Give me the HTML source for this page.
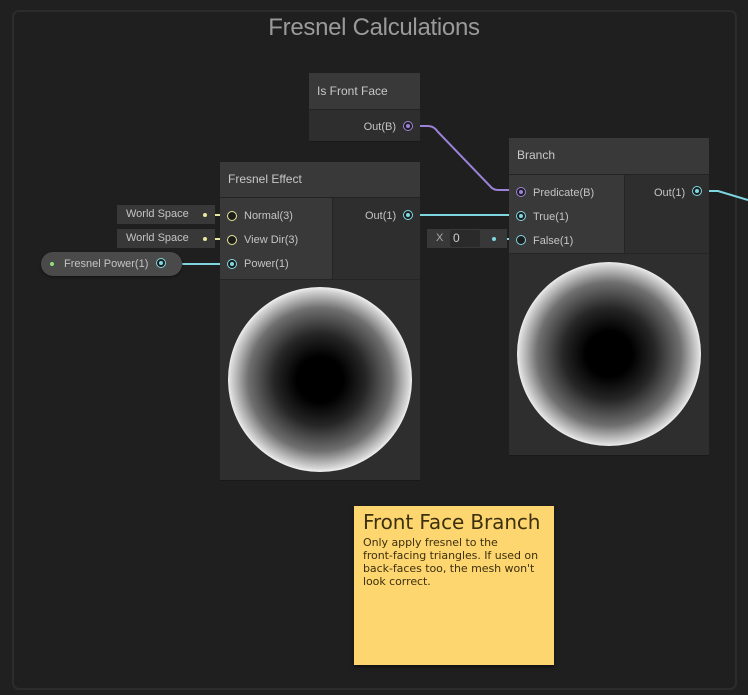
<!DOCTYPE html>
<html><head><style>
*{margin:0;padding:0;box-sizing:border-box}
body{width:748px;height:695px;background:#202020;position:relative;overflow:hidden;font-family:"Liberation Sans",sans-serif;color:#c4c4c4;font-size:11px}
.a{position:absolute}
.group{left:12px;top:10px;width:725px;height:680px;border:2px solid #2c2c2c;border-radius:7px;background:#1f1f1f}
.title{left:0;width:748px;top:14px;text-align:center;font-size:24px;color:#9a9a9a;letter-spacing:-0.3px}
.node{background:#2e2e2e;box-shadow:0 1px 0 #191919}
.hdr{background:#393939;border-bottom:1px solid #232323;font-size:12px;color:#c8c8c8;padding-left:8px}
.inp{background:#393939}
.sphere{border-radius:50%;background:radial-gradient(circle closest-side,#000 0%,#000 25%,#262626 50%,#707070 78%,#d8d8d8 97%,#eee 100%)}
.port{width:10px;height:10px;border-radius:50%;border:1.5px solid #7fd6e0;background:#1d1d1d}
.port.f:after{content:"";position:absolute;left:1.5px;top:1.5px;width:4px;height:4px;border-radius:50%;background:#7fd6e0}
.port.p{border-color:#9b82d8}.port.p:after{background:#9b82d8}
.port.y{border-color:#e8e89a}
.lbl{font-size:11px;color:#c4c4c4}
.ws{background:#383838;font-size:11px;color:#c4c4c4;padding-left:9px;line-height:18px}
</style></head><body>
<div class="a group"></div>
<div class="a title">Fresnel Calculations</div>

<svg class="a" style="left:0;top:0" width="748" height="695">
<path d="M410 126 H428 Q434 126 438 132 L490 186 Q493 190 498 190 H518" stroke="#9b82d8" stroke-width="2" fill="none"/>
<path d="M410 215 H518" stroke="#7fd6e0" stroke-width="2" fill="none"/>
<path d="M182 264 H230" stroke="#7fd6e0" stroke-width="2" fill="none"/>
<path d="M496 239 H518" stroke="#7fd6e0" stroke-width="2" fill="none"/>
<path d="M699 191 H718 L748 200" stroke="#7fd6e0" stroke-width="2" fill="none"/>
<path d="M205 215 H230 M205 239 H230" stroke="#e8e89a" stroke-width="2" fill="none"/>
</svg>

<div class="a node" style="left:309px;top:73px;width:111px;height:68px">
 <div class="hdr" style="height:37px;line-height:36px">Is Front Face</div>
 <div class="a lbl" style="right:24px;top:48px">Out(B)</div>
 <div class="a port f p" style="left:94px;top:48px"></div>
</div>

<div class="a node" style="left:220px;top:162px;width:200px;height:318px">
 <div class="hdr" style="height:36px;line-height:35px">Fresnel Effect</div>
 <div class="a inp" style="left:0;top:36px;width:113px;height:81px;border-right:1px solid #252525"></div>
 <div class="a" style="left:0;top:117px;width:200px;height:1px;background:#252525"></div>
 <div class="a lbl" style="left:24px;top:48px">Normal(3)</div>
 <div class="a lbl" style="left:24px;top:72px">View Dir(3)</div>
 <div class="a lbl" style="left:24px;top:96px">Power(1)</div>
 <div class="a lbl" style="left:145px;top:48px">Out(1)</div>
 <div class="a port y" style="left:7px;top:49px"></div>
 <div class="a port y" style="left:7px;top:73px"></div>
 <div class="a port f" style="left:7px;top:97px"></div>
 <div class="a port f" style="left:183px;top:48px"></div>
 <div class="a sphere" style="left:8px;top:125px;width:184px;height:185px"></div>
</div>

<div class="a ws" style="left:117px;top:205px;width:98px;height:19px">World Space</div>
<div class="a" style="left:203px;top:213px;width:4px;height:4px;border-radius:50%;background:#e8e89a"></div>
<div class="a ws" style="left:117px;top:229px;width:98px;height:19px">World Space</div>
<div class="a" style="left:203px;top:237px;width:4px;height:4px;border-radius:50%;background:#e8e89a"></div>

<div class="a" style="left:41px;top:252px;width:141px;height:24px;border-radius:12px;background:#4a4a4a;box-shadow:0 1px 2px #111"></div>
<div class="a" style="left:50px;top:262px;width:4px;height:4px;border-radius:50%;background:#8fe07a"></div>
<div class="a lbl" style="left:64px;top:258px">Fresnel Power(1)</div>
<div class="a port f" style="left:156px;top:258px"></div>

<div class="a" style="left:427px;top:229px;width:80px;height:19px;background:#383838"></div>
<div class="a lbl" style="left:436px;top:232px;color:#aaa">X</div>
<div class="a" style="left:450px;top:230px;width:30px;height:17px;background:#2a2a2a;border-radius:2px;padding-left:3px;line-height:17px;color:#ccc;font-size:12px">0</div>
<div class="a" style="left:492px;top:237px;width:4px;height:4px;border-radius:50%;background:#7fd6e0"></div>

<div class="a node" style="left:509px;top:138px;width:200px;height:317px">
 <div class="hdr" style="height:37px;line-height:35px">Branch</div>
 <div class="a inp" style="left:0;top:37px;width:116px;height:78px;border-right:1px solid #252525"></div>
 <div class="a" style="left:0;top:115px;width:200px;height:1px;background:#252525"></div>
 <div class="a lbl" style="left:24px;top:49px">Predicate(B)</div>
 <div class="a lbl" style="left:24px;top:73px">True(1)</div>
 <div class="a lbl" style="left:24px;top:97px">False(1)</div>
 <div class="a lbl" style="left:145px;top:49px">Out(1)</div>
 <div class="a port f p" style="left:7px;top:49px"></div>
 <div class="a port f" style="left:7px;top:73px"></div>
 <div class="a port" style="left:7px;top:97px"></div>
 <div class="a port f" style="left:183px;top:48px"></div>
 <div class="a sphere" style="left:8px;top:124px;width:184px;height:184px"></div>
</div>

<div class="a" style="left:354px;top:506px;width:200px;height:159px;background:#fdd66f;box-shadow:0 2px 3px #111;padding:4px 9px;color:#3d3010">
 <div style="font-size:20px;line-height:24px;font-family:'DejaVu Sans',sans-serif;letter-spacing:-0.1px">Front Face Branch</div>
 <div style="font-size:11px;line-height:13px;font-family:'DejaVu Sans',sans-serif;margin-top:2px;letter-spacing:-0.05px;white-space:nowrap">Only apply fresnel to the<br>front-facing triangles. If used on<br>back-faces too, the mesh won't<br>look correct.</div>
</div>
</body></html>
